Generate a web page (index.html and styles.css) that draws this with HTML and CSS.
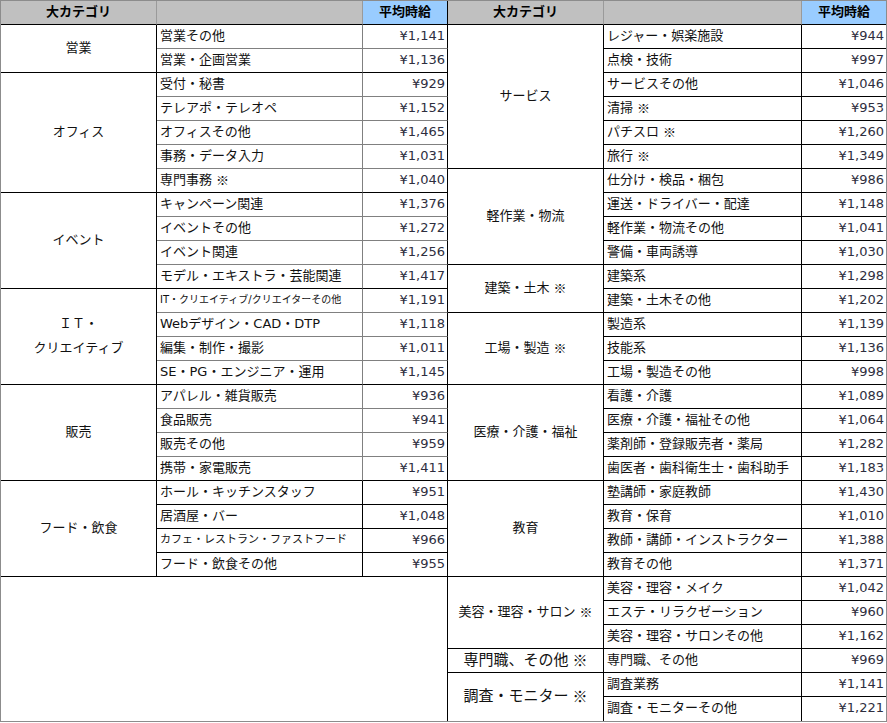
FILE: index.html
```html
<!DOCTYPE html>
<html lang="ja">
<head>
<meta charset="utf-8">
<title>平均時給</title>
<link rel="stylesheet" href="styles.css">
</head>
<body>
<div class="sheet">
  <div class="c h">大カテゴリ</div>
  <div class="c h"></div>
  <div class="c h hp">平均時給</div>
  <div class="c h hk">大カテゴリ</div>
  <div class="c h"></div>
  <div class="c h hp end">平均時給</div>

  <!-- row 1 -->
  <div class="c cat s2">営業</div>
  <div class="c ls">営業その他</div>
  <div class="c lp">¥1,141</div>
  <div class="c cat s6">サービス</div>
  <div class="c rs">レジャー・娯楽施設</div>
  <div class="c rp">¥944</div>
  <!-- row 2 -->
  <div class="c ls ge">営業・企画営業</div>
  <div class="c lp ge">¥1,136</div>
  <div class="c rs">点検・技術</div>
  <div class="c rp">¥997</div>
  <!-- row 3 -->
  <div class="c cat s5">オフィス</div>
  <div class="c ls">受付・秘書</div>
  <div class="c lp">¥929</div>
  <div class="c rs">サービスその他</div>
  <div class="c rp">¥1,046</div>
  <!-- row 4 -->
  <div class="c ls">テレアポ・テレオペ</div>
  <div class="c lp">¥1,152</div>
  <div class="c rs">清掃<span class="kome">※</span></div>
  <div class="c rp">¥953</div>
  <!-- row 5 -->
  <div class="c ls">オフィスその他</div>
  <div class="c lp">¥1,465</div>
  <div class="c rs">パチスロ<span class="kome">※</span></div>
  <div class="c rp">¥1,260</div>
  <!-- row 6 -->
  <div class="c ls">事務・データ入力</div>
  <div class="c lp">¥1,031</div>
  <div class="c rs">旅行<span class="kome">※</span></div>
  <div class="c rp">¥1,349</div>
  <!-- row 7 -->
  <div class="c ls ge">専門事務<span class="kome">※</span></div>
  <div class="c lp ge">¥1,040</div>
  <div class="c cat s4">軽作業・物流</div>
  <div class="c rs">仕分け・検品・梱包</div>
  <div class="c rp">¥986</div>
  <!-- row 8 -->
  <div class="c cat s4">イベント</div>
  <div class="c ls">キャンペーン関連</div>
  <div class="c lp">¥1,376</div>
  <div class="c rs">運送・ドライバー・配達</div>
  <div class="c rp">¥1,148</div>
  <!-- row 9 -->
  <div class="c ls">イベントその他</div>
  <div class="c lp">¥1,272</div>
  <div class="c rs">軽作業・物流その他</div>
  <div class="c rp">¥1,041</div>
  <!-- row 10 -->
  <div class="c ls">イベント関連</div>
  <div class="c lp">¥1,256</div>
  <div class="c rs">警備・車両誘導</div>
  <div class="c rp">¥1,030</div>
  <!-- row 11 -->
  <div class="c ls ge">モデル・エキストラ・芸能関連</div>
  <div class="c lp ge">¥1,417</div>
  <div class="c cat s2">建築・土木<span class="kome">※</span></div>
  <div class="c rs">建築系</div>
  <div class="c rp">¥1,298</div>
  <!-- row 12 -->
  <div class="c cat s4 two">ＩＴ・<br>クリエイティブ</div>
  <div class="c ls tiny">IT・クリエイティブ/クリエイターその他</div>
  <div class="c lp">¥1,191</div>
  <div class="c rs">建築・土木その他</div>
  <div class="c rp">¥1,202</div>
  <!-- row 13 -->
  <div class="c ls">Webデザイン・CAD・DTP</div>
  <div class="c lp">¥1,118</div>
  <div class="c cat s3">工場・製造<span class="kome">※</span></div>
  <div class="c rs">製造系</div>
  <div class="c rp">¥1,139</div>
  <!-- row 14 -->
  <div class="c ls">編集・制作・撮影</div>
  <div class="c lp">¥1,011</div>
  <div class="c rs">技能系</div>
  <div class="c rp">¥1,136</div>
  <!-- row 15 -->
  <div class="c ls ge">SE・PG・エンジニア・運用</div>
  <div class="c lp ge">¥1,145</div>
  <div class="c rs">工場・製造その他</div>
  <div class="c rp">¥998</div>
  <!-- row 16 -->
  <div class="c cat s4">販売</div>
  <div class="c ls">アパレル・雑貨販売</div>
  <div class="c lp">¥936</div>
  <div class="c cat s4">医療・介護・福祉</div>
  <div class="c rs">看護・介護</div>
  <div class="c rp">¥1,089</div>
  <!-- row 17 -->
  <div class="c ls">食品販売</div>
  <div class="c lp">¥941</div>
  <div class="c rs">医療・介護・福祉その他</div>
  <div class="c rp">¥1,064</div>
  <!-- row 18 -->
  <div class="c ls">販売その他</div>
  <div class="c lp">¥959</div>
  <div class="c rs">薬剤師・登録販売者・薬局</div>
  <div class="c rp">¥1,282</div>
  <!-- row 19 -->
  <div class="c ls ge">携帯・家電販売</div>
  <div class="c lp ge">¥1,411</div>
  <div class="c rs">歯医者・歯科衛生士・歯科助手</div>
  <div class="c rp">¥1,183</div>
  <!-- row 20 -->
  <div class="c cat s4">フード・飲食</div>
  <div class="c ls k">ホール・キッチンスタッフ</div>
  <div class="c lp k">¥951</div>
  <div class="c cat s4">教育</div>
  <div class="c rs">塾講師・家庭教師</div>
  <div class="c rp">¥1,430</div>
  <!-- row 21 -->
  <div class="c ls k">居酒屋・バー</div>
  <div class="c lp k">¥1,048</div>
  <div class="c rs">教育・保育</div>
  <div class="c rp">¥1,010</div>
  <!-- row 22 -->
  <div class="c ls k small">カフェ・レストラン・ファストフード</div>
  <div class="c lp k">¥966</div>
  <div class="c rs">教師・講師・インストラクター</div>
  <div class="c rp">¥1,388</div>
  <!-- row 23 -->
  <div class="c ls k">フード・飲食その他</div>
  <div class="c lp k">¥955</div>
  <div class="c rs">教育その他</div>
  <div class="c rp">¥1,371</div>
  <!-- row 24 -->
  <div class="c blank"></div>
  <div class="c cat s3">美容・理容・サロン<span class="kome">※</span></div>
  <div class="c rs">美容・理容・メイク</div>
  <div class="c rp">¥1,042</div>
  <!-- row 25 -->
  <div class="c rs">エステ・リラクゼーション</div>
  <div class="c rp">¥960</div>
  <!-- row 26 -->
  <div class="c rs">美容・理容・サロンその他</div>
  <div class="c rp">¥1,162</div>
  <!-- row 27 -->
  <div class="c cat big">専門職、その他<span class="kome">※</span></div>
  <div class="c rs">専門職、その他</div>
  <div class="c rp">¥969</div>
  <!-- row 28 -->
  <div class="c cat s2 big last">調査・モニター<span class="kome">※</span></div>
  <div class="c rs">調査業務</div>
  <div class="c rp">¥1,141</div>
  <!-- row 29 -->
  <div class="c rs last">調査・モニターその他</div>
  <div class="c rp last">¥1,221</div>
</div>
</body>
</html>
```

FILE: styles.css
```css
html, body {
  margin: 0;
  padding: 0;
  background: #ffffff;
}

.sheet {
  display: grid;
  grid-template-columns: 156px 206px 85px 156px 198px 84px;
  grid-template-rows: repeat(30, 24px);
  width: 887px;
  box-sizing: border-box;
  border: 1px solid #8c8c8c;
  font-family: "DejaVu Sans", "Noto Sans CJK JP", sans-serif;
  font-size: 13px;
  color: #111111;
}

.c {
  box-sizing: border-box;
  display: flex;
  align-items: center;
  padding-bottom: 2px;
  border-right: 1px solid #000000;
  border-bottom: 1px solid #000000;
  white-space: nowrap;
  overflow: hidden;
  line-height: 16px;
}

.kome {
  font-family: "Noto Sans CJK JP", sans-serif;
  margin-left: 4px;
}

/* header */
.h {
  background: #c0c0c0;
  justify-content: center;
  font-weight: bold;
  border-right-color: #9a9a9a;
  border-bottom-color: #000000;
  color: #000000;
}
.hp {
  background: #99ccff;
  border-right-color: #000000;
}
.hk {
  border-right-color: #9a9a9a;
}
.end {
  border-right: none;
}

/* category */
.cat {
  justify-content: center;
  text-align: center;
}
.two {
  line-height: 24px;
}
.big {
  font-size: 15px;
}

/* left table */
.ls {
  padding-left: 3px;
  border-bottom-color: #808080;
  border-right-color: #808080;
}
.lp {
  justify-content: flex-end;
  padding-right: 2px;
  border-bottom-color: #808080;
  color: #2e2e3e;
}
.ge {
  border-bottom-color: #000000;
}
.k {
  border-bottom-color: #000000;
  border-right-color: #000000;
}

/* right table */
.rs {
  padding-left: 3px;
}
.rp {
  justify-content: flex-end;
  padding-right: 2px;
  border-right: none;
  color: #2e2e3e;
}

.tiny {
  font-size: 10px;
}
.small {
  font-size: 11px;
}

/* spans */
.s2 { grid-row: span 2; }
.s3 { grid-row: span 3; }
.s4 { grid-row: span 4; }
.s5 { grid-row: span 5; }
.s6 { grid-row: span 6; }

.blank {
  grid-row: span 6;
  grid-column: span 3;
  border-bottom: none;
}

.last {
  border-bottom: none;
}
```
